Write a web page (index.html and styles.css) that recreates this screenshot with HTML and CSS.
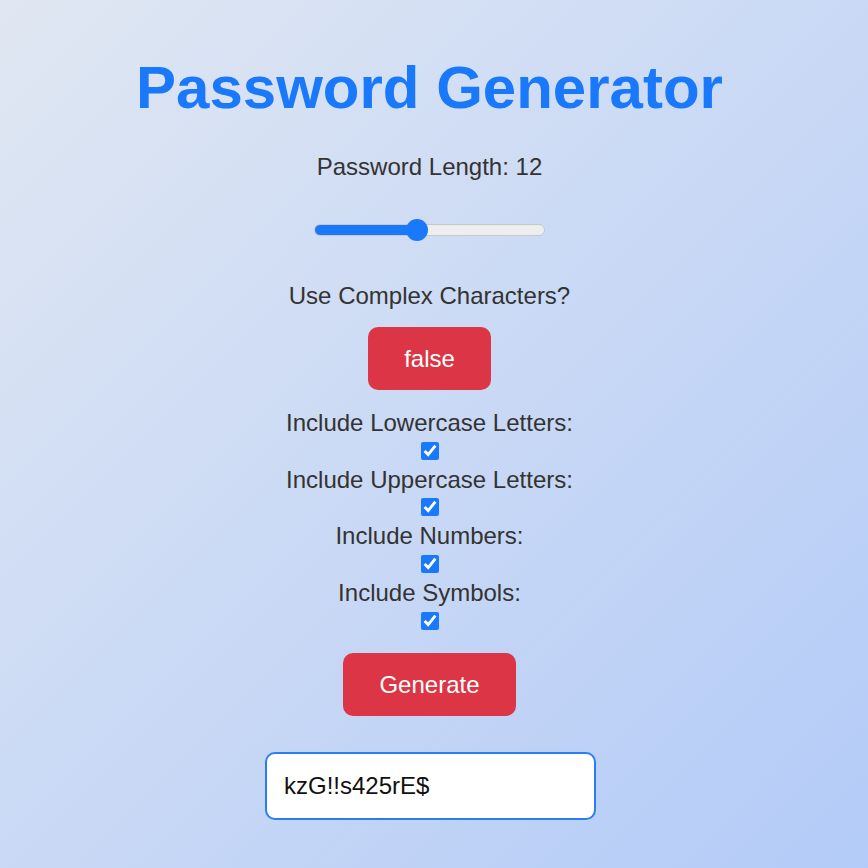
FILE: index.html
```html
<!DOCTYPE html>
<html lang="en">
<head>
<meta charset="utf-8">
<title>Password Generator</title>
<link rel="stylesheet" href="styles.css">
</head>
<body>
<main class="app">
  <h1 class="title">Password Generator</h1>
  <label class="length-label" for="len">Password Length: 12</label>
  <input id="len" class="slider" type="range" min="1" max="26" value="12" style="--fill: 44.6%">
  <p class="question">Use Complex Characters?</p>
  <button class="btn btn-toggle" type="button">false</button>
  <div class="options">
    <div class="option">
      <label for="lower">Include Lowercase Letters:</label>
      <input id="lower" class="check" type="checkbox" checked>
    </div>
    <div class="option">
      <label for="upper">Include Uppercase Letters:</label>
      <input id="upper" class="check" type="checkbox" checked>
    </div>
    <div class="option">
      <label for="nums">Include Numbers:</label>
      <input id="nums" class="check" type="checkbox" checked>
    </div>
    <div class="option">
      <label for="syms">Include Symbols:</label>
      <input id="syms" class="check" type="checkbox" checked>
    </div>
  </div>
  <button class="btn btn-generate" type="button">Generate</button>
  <input class="output" type="text" value="kzG!!s425rE$" readonly>
</main>
</body>
</html>
```
FILE: styles.css
```css
* {
  box-sizing: border-box;
}

html, body {
  margin: 0;
  height: 100%;
}

body {
  background: linear-gradient(135deg, #e0e7f2 0%, #b3cbf8 100%);
  font-family: "Liberation Sans", Arial, sans-serif;
  color: #333;
  overflow: hidden;
}

.app {
  display: flex;
  flex-direction: column;
  align-items: center;
  padding: 58px 9px 0 0;
  text-align: center;
}

.title {
  margin: 0;
  font-size: 60px;
  line-height: 60px;
  font-weight: bold;
  color: #1a79fb;
}

.length-label {
  margin-top: 35px;
  font-size: 24px;
  line-height: 28px;
}

.slider {
  -webkit-appearance: none;
  appearance: none;
  margin: 43px 0 0;
  width: 231px;
  height: 12px;
  border: 1px solid #c8c8c8;
  border-radius: 6px;
  background: linear-gradient(to right, #1a79fb 0, #1a79fb var(--fill), #eeeeee var(--fill), #eeeeee 100%);
  outline: none;
}

.slider::-webkit-slider-thumb {
  -webkit-appearance: none;
  appearance: none;
  width: 22px;
  height: 22px;
  border-radius: 50%;
  background: #1a79fb;
  border: none;
}

.question {
  margin: 46px 0 0;
  font-size: 24px;
  line-height: 28px;
}

.btn {
  border: none;
  border-radius: 10px;
  background: #dc3545;
  color: #fff;
  font-family: "Liberation Sans", Arial, sans-serif;
  font-size: 24px;
  line-height: 27px;
  padding: 18px 36px;
}

.btn-toggle {
  margin-top: 17px;
}

.options {
  margin-top: 19px;
  display: flex;
  flex-direction: column;
  align-items: center;
}

.option {
  display: flex;
  flex-direction: column;
  align-items: center;
  font-size: 24px;
  line-height: 28px;
}

.check {
  margin: 4.8px 0 5.9px 2px;
  width: 18px;
  height: 18px;
  accent-color: #1a79fb;
}

.btn-generate {
  margin-top: 17px;
}

.output {
  margin-top: 36px;
  width: 331px;
  height: 68px;
  padding: 0 17px;
  border: 2px solid #2a7ef3;
  border-radius: 10px;
  background: #fff;
  font-family: "Liberation Sans", Arial, sans-serif;
  font-size: 24px;
  color: #111;
  outline: none;
  transform: translateX(1px);
}
```
